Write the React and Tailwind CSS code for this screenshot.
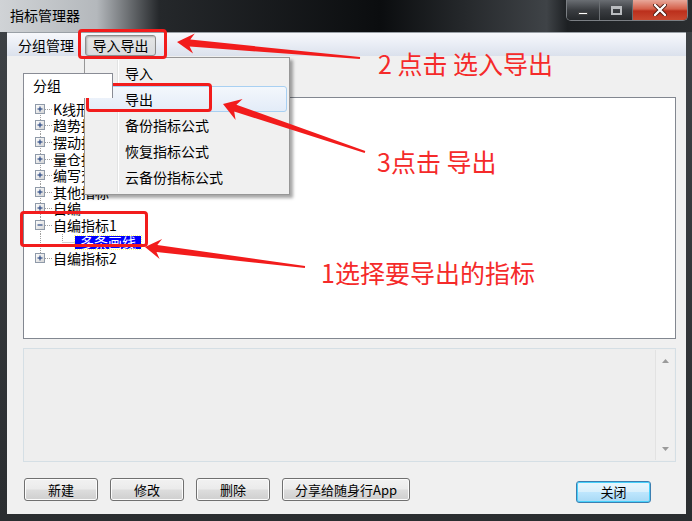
const tree = [
  { label: "K线形态", kind: "plus" },
  { label: "趋势指标", kind: "plus" },
  { label: "摆动指标", kind: "plus" },
  { label: "量仓指标", kind: "plus" },
  { label: "编写交易", kind: "plus" },
  { label: "其他指标", kind: "plus" },
  { label: "自编", kind: "plus" },
  { label: "自编指标1", kind: "minus" },
  { label: "多条画线", kind: "child" },
  { label: "自编指标2", kind: "plus" },
];

const menuItems = ["导入", "导出", "备份指标公式", "恢复指标公式", "云备份指标公式"];

// tapered annotation arrow, tip -> tail
function arrowPts(tx, ty, sx, sy, L, W, w1, w0) {
  const dx = sx - tx;
  const dy = sy - ty;
  const len = Math.hypot(dx, dy);
  const ux = dx / len;
  const uy = dy / len;
  const nx = -uy;
  const ny = ux;
  const p = (d, o) => [tx + ux * d + nx * o, ty + uy * d + ny * o];
  return [
    p(0, 0),
    p(L, W),
    p(L - 4, w1),
    [sx + nx * w0, sy + ny * w0],
    [sx - nx * w0, sy - ny * w0],
    p(L - 4, -w1),
    p(L, -W),
  ]
    .map((a) => a.map((v) => v.toFixed(1)).join(","))
    .join(" ");
}

function Expander({ minus }) {
  return (
    <g>
      <rect x="11.5" y="3.5" width="9" height="9" fill="url(#box)" stroke="#8f9aa9" />
      <line x1="13.5" y1="8" x2="18.5" y2="8" stroke="#2c4a86" strokeWidth="1.2" />
      {!minus && <line x1="16" y1="5.5" x2="16" y2="10.5" stroke="#2c4a86" strokeWidth="1.2" />}
    </g>
  );
}

function TreeRow({ item, first, last }) {
  if (item.kind === "child") {
    return (
      <div className="h-[16.6px] flex items-center">
        <svg width="51" height="17" className="shrink-0 overflow-visible">
          <line x1="16.5" y1="0" x2="16.5" y2="17" stroke="#a0a0a0" strokeDasharray="1 1" />
          <line x1="38.5" y1="0" x2="38.5" y2="8" stroke="#a0a0a0" strokeDasharray="1 1" />
          <line x1="38.5" y1="8.5" x2="51" y2="8.5" stroke="#a0a0a0" strokeDasharray="1 1" />
        </svg>
        <span className="h-[13px] px-[5px] bg-[#0000ff] text-white text-[14px] leading-[13px] outline-1 outline-dotted outline-[#ffff80]">
          {item.label}
        </span>
      </div>
    );
  }
  return (
    <div className="h-[16.6px] flex items-center">
      <svg width="28" height="17" className="shrink-0 overflow-visible">
        <defs>
          <linearGradient id="box" x1="0" y1="0" x2="1" y2="1">
            <stop offset="0" stopColor="#ffffff" />
            <stop offset="1" stopColor="#d3d3d3" />
          </linearGradient>
        </defs>
        <line
          x1="16.5"
          y1={first ? 8 : 0}
          x2="16.5"
          y2={last ? 8 : 17}
          stroke="#a0a0a0"
          strokeDasharray="1 1"
        />
        <line x1="21" y1="8.5" x2="28" y2="8.5" stroke="#a0a0a0" strokeDasharray="1 1" />
        <Expander minus={item.kind === "minus"} />
      </svg>
      <span className="ml-[1px] text-[14px] leading-[15px] text-black whitespace-nowrap">{item.label}</span>
    </div>
  );
}

function WinButton({ children, className = "" }) {
  return (
    <button
      className={`h-[23px] rounded-[3px] border border-[#707070] bg-[linear-gradient(to_bottom,#f2f2f2_0%,#ebebeb_48%,#dddddd_52%,#cfcfcf_100%)] shadow-[inset_0_0_0_1px_#fcfcfc] text-[13px] leading-[20px] text-black ${className}`}
    >
      {children}
    </button>
  );
}

export default function App() {
  return (
    <div className="relative w-[692px] h-[521px] overflow-hidden flex flex-col bg-[linear-gradient(to_bottom,#3e4246,#2a2d30)] [font-family:'Noto_Sans_CJK_SC','Noto_Sans',sans-serif]">
      {/* title bar */}
      <div className="h-[32px] shrink-0 flex items-start bg-[linear-gradient(to_right,#d0d3d6_0%,#b4b8bc_14%,#25282b_23%,#0b0d0f_55%,#3f4347_79%,#1d2023_82%,#2a2d30_100%)]">
        <div className="pl-[10px] pt-[5px] text-[14px] leading-[20px] text-black">指标管理器</div>
        <div className="ml-auto mr-[4px] flex h-[21px] rounded-b-[5px] border border-t-0 border-[#7b7f84] overflow-hidden">
          <div className="w-[33px] flex items-end justify-center pb-[5px] border-r border-[#6a6e72] bg-[linear-gradient(to_bottom,#6a6e73,#3a3d41_50%,#25282b)]">
            <div className="w-[10px] h-[3px] bg-white border border-[#444]" />
          </div>
          <div className="w-[33px] flex items-center justify-center border-r border-[#6a6e72] bg-[linear-gradient(to_bottom,#6a6e73,#3a3d41_50%,#25282b)]">
            <div className="w-[11px] h-[9px] border-2 border-t-[3px] border-[#b9bcbf]" />
          </div>
          <div className="w-[54px] flex items-center justify-center bg-[linear-gradient(to_bottom,#e8a89a,#d4604a_45%,#bb2f1c_55%,#c9482f)]">
            <svg width="14" height="12" viewBox="0 0 14 12">
              <path d="M2 1 L12 11 M12 1 L2 11" stroke="#4a1a10" strokeWidth="4" strokeLinecap="round" />
              <path d="M2 1 L12 11 M12 1 L2 11" stroke="#ffffff" strokeWidth="2.4" strokeLinecap="round" />
            </svg>
          </div>
        </div>
      </div>

      {/* window body */}
      <div className="flex-1 ml-[7px] mr-[6px] mb-[7px] bg-[#f0f0f0] flex flex-col border-t border-[#9aa0a6]">
        {/* menu bar */}
        <div className="h-[23px] shrink-0 flex items-center bg-[linear-gradient(to_bottom,#f7f8fb,#e9edf5_50%,#dbe1ec)]">
          <span className="ml-[11px] text-[14px] leading-[20px] text-black">分组管理</span>
          <div className="ml-[11px] mt-[1px] w-[71px] h-[21px] flex items-center justify-center rounded-[3px] border border-[#8c8c8c] bg-[linear-gradient(to_bottom,#e6e6e6,#d9dbde)] shadow-[inset_1px_1px_2px_rgba(0,0,0,0.25)] text-[14px] leading-[20px] text-black">
            导入导出
          </div>
        </div>

        <div className="flex-1 flex flex-col pl-[16px] pr-[10px] pt-[17px]">
          {/* tab */}
          <div className="relative z-10 w-[90px] h-[25px] -mb-px bg-white border border-b-0 border-[#898c95] pl-[9px] text-[14px] leading-[22px] text-black">
            分组
          </div>
          {/* tree pane */}
          <div className="h-[242px] shrink-0 bg-white border border-[#828790] pt-[3px]">
            {tree.map((item, i) => (
              <TreeRow key={item.label} item={item} first={i === 0} last={i === tree.length - 1} />
            ))}
          </div>

          {/* info panel */}
          <div className="mt-[9px] h-[114px] shrink-0 flex justify-end border border-[#d5dfe5] bg-[#eeeeee] p-px">
            <div className="w-[19px] flex flex-col items-center justify-between py-[9px] border-l border-[#e2e2e2] bg-[#f0f0f0]">
              <svg width="7" height="4"><path d="M0 4 L3.5 0 L7 4 Z" fill="#9a9a9a" /></svg>
              <svg width="7" height="4"><path d="M0 0 L3.5 4 L7 0 Z" fill="#9a9a9a" /></svg>
            </div>
          </div>

          {/* buttons */}
          <div className="mt-[16px] flex items-start pl-px">
            <WinButton className="w-[74px]">新建</WinButton>
            <WinButton className="ml-[12px] w-[74px]">修改</WinButton>
            <WinButton className="ml-[12px] w-[74px]">删除</WinButton>
            <WinButton className="ml-[12px] w-[128px]">分享给随身行App</WinButton>
            <button className="ml-auto mr-[25px] mt-[3px] w-[75px] h-[22px] rounded-[3px] border border-[#3c7fb1] bg-[linear-gradient(to_bottom,#eaf6fd_0%,#d9f0fc_48%,#bee6fd_52%,#a7d9f5_100%)] shadow-[inset_0_0_0_1px_#48d1fb] text-[13px] leading-[20px] text-black">
              关闭
            </button>
          </div>
        </div>
      </div>

      {/* dropdown menu */}
      <div className="absolute left-[84px] top-[57px] w-[206px] h-[138px] bg-[#f0f0f0] border border-[#979797] shadow-[3px_3px_3px_rgba(0,0,0,0.35)] pt-[2px] px-[2px]">
        <div className="absolute left-[32px] top-[2px] bottom-[2px] w-px bg-[#e2e3e3]" />
        <div className="absolute left-[33px] top-[2px] bottom-[2px] w-px bg-white" />
        {menuItems.map((m, i) => (
          <div
            key={m}
            className={`relative h-[26px] flex items-center pl-[37px] text-[14px] leading-[20px] text-black rounded-[3px] ${
              i === 1
                ? "border border-[#a8d0f2] bg-[linear-gradient(to_bottom,#f3f7fc,#e3ecf8)]"
                : "border border-transparent"
            }`}
          >
            {m}
          </div>
        ))}
      </div>

      {/* annotations */}
      <svg className="absolute inset-0 pointer-events-none" width="692" height="521">
        <polygon points={arrowPts(177, 42, 360, 58, 17, 10, 3.5, 1)} fill="#f21c1c" />
        <polygon points={arrowPts(223, 104, 365, 152, 17, 11, 3.5, 1)} fill="#f21c1c" />
        <polygon points={arrowPts(145, 247, 305, 267, 16, 10, 3.5, 1)} fill="#f21c1c" />
      </svg>
      <div className="absolute left-[78px] top-[29px] w-[89px] h-[30px] border-[3px] border-[#f21c1c] rounded-[4px]" />
      <div className="absolute left-[86px] top-[83px] w-[126px] h-[29px] border-[3px] border-[#f21c1c] rounded-[4px]" />
      <div className="absolute left-[20px] top-[211px] w-[128px] h-[36px] border-[3px] border-[#f21c1c] rounded-[4px]" />

      <div className="absolute left-[378px] top-[50px] text-[25px] leading-[27px] text-[#f52a2a] whitespace-nowrap">
        2 点击 选入导出
      </div>
      <div className="absolute left-[377px] top-[148px] text-[25px] leading-[27px] text-[#f52a2a] whitespace-nowrap">
        3点击 导出
      </div>
      <div className="absolute left-[321px] top-[259px] text-[25px] leading-[27px] text-[#f52a2a] whitespace-nowrap">
        1选择要导出的指标
      </div>
    </div>
  );
}
